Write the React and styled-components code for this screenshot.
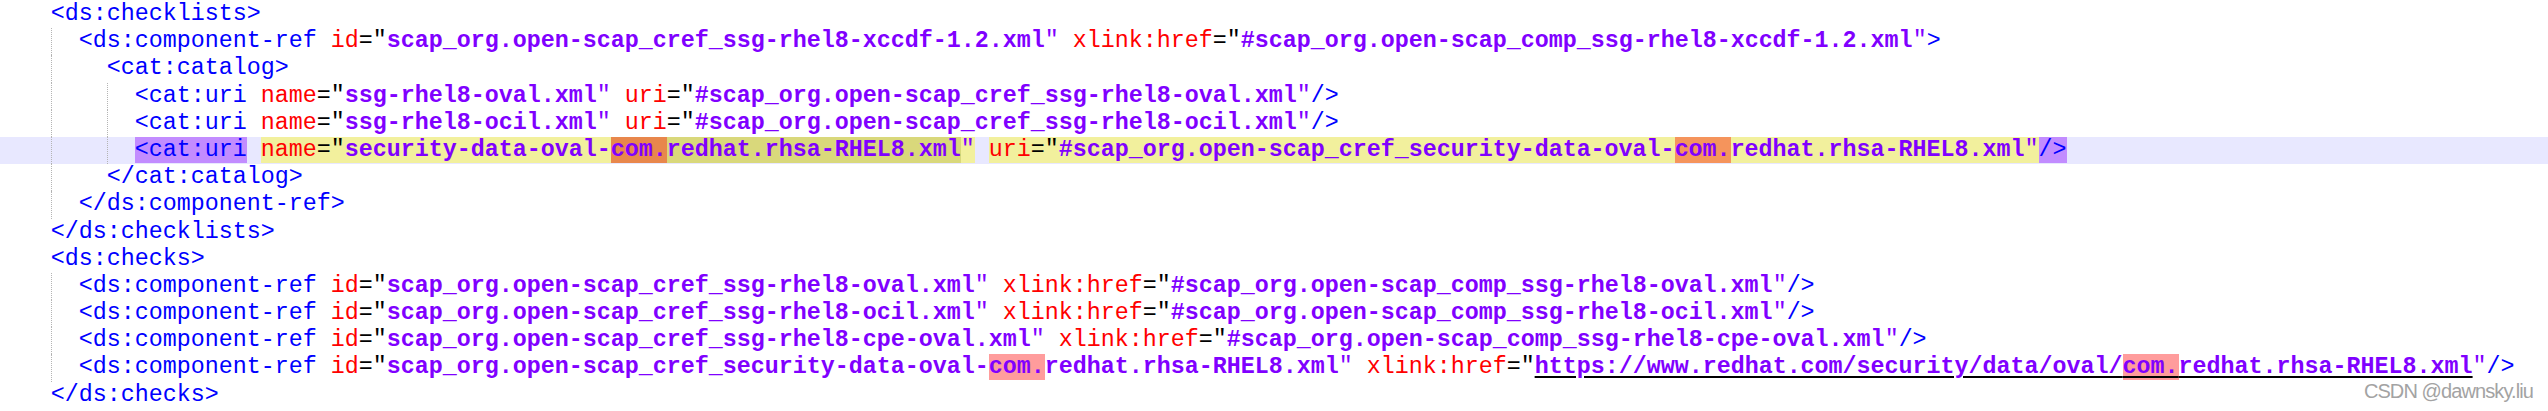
import React from 'react';
import styled, { createGlobalStyle } from 'styled-components';

const GlobalStyle = createGlobalStyle`
  html, body {
    margin: 0;
    padding: 0;
    background: #ffffff;
  }
`;

const colors = {
  tag: '#0000ff',
  attr: '#ff0000',
  eq: '#000000',
  val: '#8000ff',
  url: '#8000ff',
  quote: '#8000ff',
  sp: '#000000',
};

const marks = {
  tag: '#c28cff',
  attr: '#f2f09d',
  hit: '#e8874c',
  hit2: '#f5945c',
  sel: '#d9d87b',
  find: '#ff9c9c',
};

const Editor = styled.div`
  position: relative;
  width: 2548px;
  height: 411px;
  overflow: hidden;
  padding-top: 1px;
  box-sizing: border-box;
  font-family: "Liberation Mono", "Courier New", monospace;
  font-size: 23.333px;
`;

const Line = styled.div`
  display: flex;
  align-items: center;
  height: 27.2px;
  padding-left: 50.7px;
  background: ${(p) => (p.$current ? '#e8e8ff' : 'transparent')};
`;

const Indent = styled.span`
  flex: 0 0 28px;
  align-self: stretch;
  box-sizing: border-box;
  border-left: 1px dotted ${(p) => (p.$guide ? '#b4b4b4' : 'transparent')};
`;

const Code = styled.span`
  white-space: pre;
  line-height: 27.2px;
`;

const Tok = styled.span`
  color: ${(p) => colors[p.$k]};
  font-weight: ${(p) => (p.$k === 'val' || p.$k === 'url' ? 700 : 400)};
  background: ${(p) => (p.$mark ? marks[p.$mark] : 'transparent')};
  text-decoration: ${(p) => (p.$k === 'url' ? 'underline' : 'none')};
  text-decoration-color: #000;
  text-decoration-thickness: 1.5px;
  text-underline-offset: 3px;
`;

const Watermark = styled.div`
  position: absolute;
  right: 15px;
  top: 379px;
  font-family: "Liberation Sans", Arial, sans-serif;
  font-size: 20px;
  line-height: 24px;
  letter-spacing: -0.9px;
  color: #a3a3a3;
`;

// token helpers
const t = (text, mark) => ({ k: 'tag', text, mark });
const sp = (mark) => ({ k: 'sp', text: ' ', mark });
const attr = (name, value) => [
  sp(),
  { k: 'attr', text: name },
  { k: 'eq', text: '="' },
  { k: 'val', text: value },
  { k: 'quote', text: '"' },
];

const lines = [
  { indent: [], toks: [t('<ds:checklists>')] },
  {
    indent: [1],
    toks: [
      t('<ds:component-ref'),
      ...attr('id', 'scap_org.open-scap_cref_ssg-rhel8-xccdf-1.2.xml'),
      ...attr('xlink:href', '#scap_org.open-scap_comp_ssg-rhel8-xccdf-1.2.xml'),
      t('>'),
    ],
  },
  { indent: [1, 0], toks: [t('<cat:catalog>')] },
  {
    indent: [1, 0, 1],
    toks: [
      t('<cat:uri'),
      ...attr('name', 'ssg-rhel8-oval.xml'),
      ...attr('uri', '#scap_org.open-scap_cref_ssg-rhel8-oval.xml'),
      t('/>'),
    ],
  },
  {
    indent: [1, 0, 1],
    toks: [
      t('<cat:uri'),
      ...attr('name', 'ssg-rhel8-ocil.xml'),
      ...attr('uri', '#scap_org.open-scap_cref_ssg-rhel8-ocil.xml'),
      t('/>'),
    ],
  },
  {
    indent: [1, 0, 1],
    current: true,
    toks: [
      t('<cat:uri', 'tag'),
      sp(),
      { k: 'attr', text: 'name', mark: 'attr' },
      { k: 'eq', text: '="', mark: 'attr' },
      { k: 'val', text: 'security-data-oval-', mark: 'attr' },
      { k: 'val', text: 'com.', mark: 'hit' },
      { k: 'val', text: 'redhat.rhsa-RHEL8.xml', mark: 'sel' },
      { k: 'quote', text: '"', mark: 'attr' },
      sp(),
      { k: 'attr', text: 'uri', mark: 'attr' },
      { k: 'eq', text: '="', mark: 'attr' },
      { k: 'val', text: '#scap_org.open-scap_cref_security-data-oval-', mark: 'attr' },
      { k: 'val', text: 'com.', mark: 'hit2' },
      { k: 'val', text: 'redhat.rhsa-RHEL8.xml', mark: 'attr' },
      { k: 'quote', text: '"', mark: 'attr' },
      t('/>', 'tag'),
    ],
  },
  { indent: [1, 0], toks: [t('</cat:catalog>')] },
  { indent: [1], toks: [t('</ds:component-ref>')] },
  { indent: [], toks: [t('</ds:checklists>')] },
  { indent: [], toks: [t('<ds:checks>')] },
  {
    indent: [1],
    toks: [
      t('<ds:component-ref'),
      ...attr('id', 'scap_org.open-scap_cref_ssg-rhel8-oval.xml'),
      ...attr('xlink:href', '#scap_org.open-scap_comp_ssg-rhel8-oval.xml'),
      t('/>'),
    ],
  },
  {
    indent: [1],
    toks: [
      t('<ds:component-ref'),
      ...attr('id', 'scap_org.open-scap_cref_ssg-rhel8-ocil.xml'),
      ...attr('xlink:href', '#scap_org.open-scap_comp_ssg-rhel8-ocil.xml'),
      t('/>'),
    ],
  },
  {
    indent: [1],
    toks: [
      t('<ds:component-ref'),
      ...attr('id', 'scap_org.open-scap_cref_ssg-rhel8-cpe-oval.xml'),
      ...attr('xlink:href', '#scap_org.open-scap_comp_ssg-rhel8-cpe-oval.xml'),
      t('/>'),
    ],
  },
  {
    indent: [1],
    toks: [
      t('<ds:component-ref'),
      sp(),
      { k: 'attr', text: 'id' },
      { k: 'eq', text: '="' },
      { k: 'val', text: 'scap_org.open-scap_cref_security-data-oval-' },
      { k: 'val', text: 'com.', mark: 'find' },
      { k: 'val', text: 'redhat.rhsa-RHEL8.xml' },
      { k: 'quote', text: '"' },
      sp(),
      { k: 'attr', text: 'xlink:href' },
      { k: 'eq', text: '="' },
      { k: 'url', text: 'https://www.redhat.com/security/data/oval/' },
      { k: 'url', text: 'com.', mark: 'find' },
      { k: 'url', text: 'redhat.rhsa-RHEL8.xml' },
      { k: 'quote', text: '"' },
      t('/>'),
    ],
  },
  { indent: [], toks: [t('</ds:checks>')] },
];

export default function App() {
  return (
    <>
      <GlobalStyle />
      <Editor>
        {lines.map((line, i) => (
          <Line key={i} $current={line.current}>
            {line.indent.map((g, j) => (
              <Indent key={j} $guide={!!g} />
            ))}
            <Code>
              {line.toks.map((tok, j) => (
                <Tok key={j} $k={tok.k} $mark={tok.mark}>
                  {tok.text}
                </Tok>
              ))}
            </Code>
          </Line>
        ))}
        <Watermark>CSDN @dawnsky.liu</Watermark>
      </Editor>
    </>
  );
}
